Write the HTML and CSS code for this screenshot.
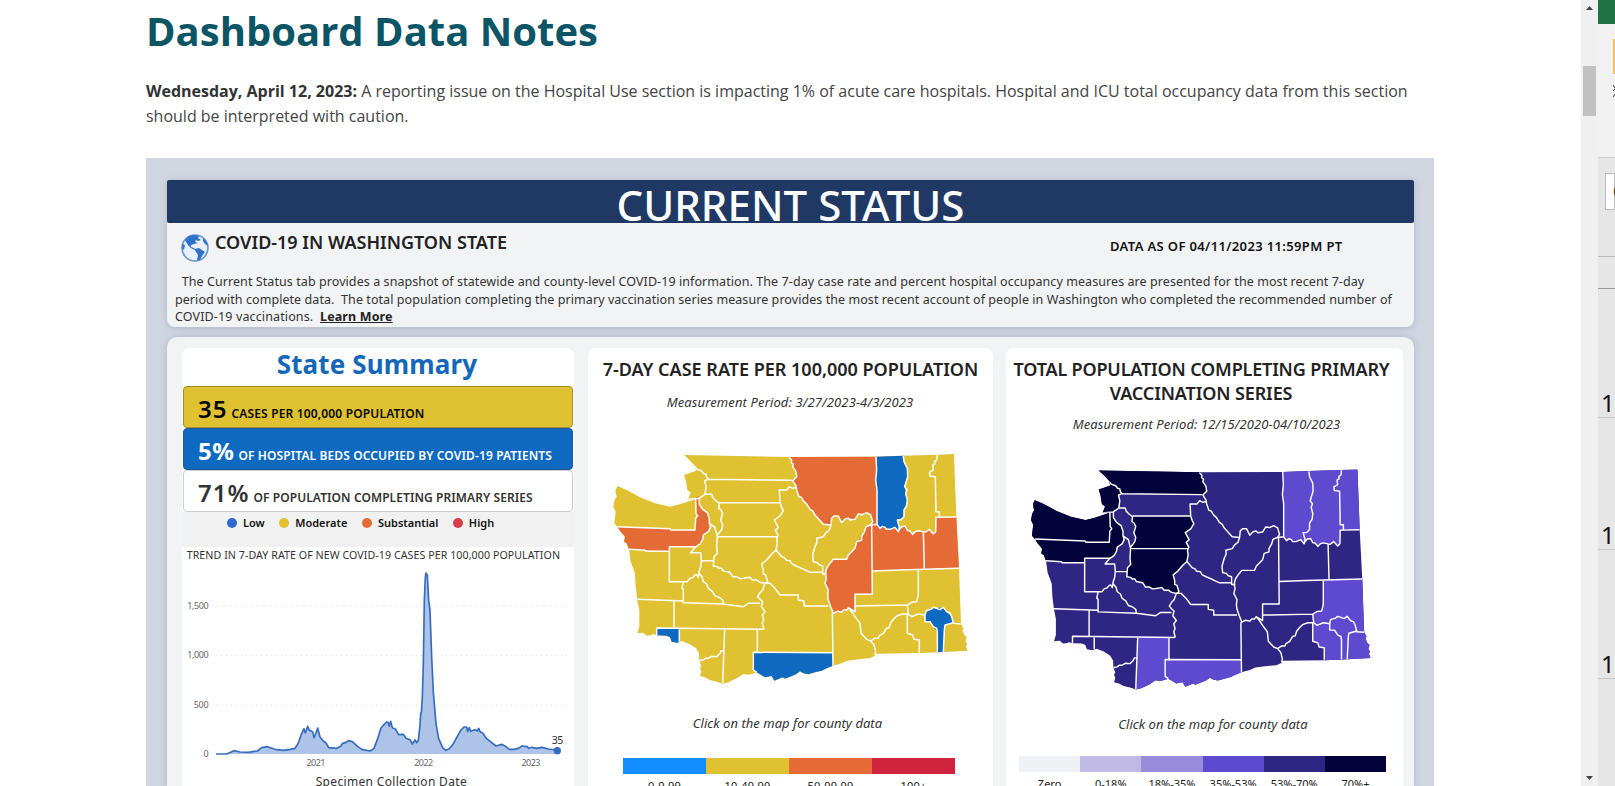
FILE: index.html
```html
<!DOCTYPE html>
<html lang="en">
<head>
<meta charset="utf-8">
<title>Dashboard Data Notes</title>
<link rel="stylesheet" href="styles.css">
</head>
<body>
<svg class="defs" aria-hidden="true">
  <defs>
    <path id="state" d="M252 45 568 51 828 50 910 47 1012 44 1062 42 1069 232 1077 385 1083 552 1090 565 1087 572 1093 585 1100 592 1096 603 1101 612 1098 620 1103 632 1030 636 960 639 826 641 824 648 808 655 780 657 760 660 742 662 725 670 699 677 680 685 665 692 645 697 625 703 610 700 600 694 588 703 570 710 555 716 548 712 523 722 515 708 503 710 495 712 480 703 470 697 462 700 445 704 430 702 410 715 385 727 368 731 350 725 330 720 315 712 300 708 304 695 300 685 304 677 298 665 297 640 288 625 268 612 245 603 232 608 215 605 210 592 200 587 170 586 160 583 150 586 140 587 130 578 112 580 118 560 118 510 112 480 107 440 105 400 92 365 87 328 80 310 72 305 75 290 62 275 52 260 43 250 47 215 40 200 44 180 50 170 46 152 52 138 80 150 120 172 165 190 210 200 240 193 285 178 264 178 272 158 262 150 258 125 252 105 275 97 288 92 285 78 268 60Z"/>
    <clipPath id="inState"><use href="#state"/></clipPath>
    <path id="okanogan" d="M567 45 575 60 578 80 588 95 590 110 578 122 588 138 590 150 597 170 612 185 630 208 645 225 670 253 693 255 695 235 715 228 725 248 745 235 765 238 775 222 800 218 812 225 818 245 812 255 831 253 831 150 827 120 830 90 828 45Z"/>
    <path id="ferry" d="M828 45 830 90 827 120 831 150 831 253 840 265 855 262 870 268 885 262 895 275 898 262 892 240 912 230 912 210 922 180 914 140 923 110 922 85 912 65 910 40Z"/>
    <path id="northeast" d="M910 40 912 65 922 85 923 110 914 140 922 180 912 210 912 230 892 240 898 262 895 272 905 260 915 258 938 283 955 272 970 275 988 268 1000 282 1007 275 1008 232 1075 231 1075 35Z"/>
    <path id="lincolnSpokane" d="M815 255 831 253 840 265 855 262 870 268 885 262 895 275 905 260 915 258 938 283 955 272 970 275 988 268 1000 282 1007 275 1008 232 1085 231 1085 385 900 390 817 393Z"/>
    <path id="grant" d="M812 255 798 260 785 290 770 305 765 325 745 345 740 358 700 358 690 370 680 385 676 402 675 430 685 450 685 480 692 500 700 520 725 517 740 510 745 503 765 515 765 463 817 463 815 255Z"/>
    <path id="whatcom" d="M240 35 568 45 575 60 578 80 588 95 590 110 578 122 325 118 318 103 305 93 285 80Z"/>
    <path id="island" d="M245 100 285 80 305 93 318 103 325 118 314 122 318 140 315 163 297 175 255 185Z"/>
    <path id="clallam" d="M30 130 210 200 287 178 288 220 293 228 287 235 285 270 212 270 210 266 30 260Z"/>
    <path id="jefferson" d="M30 260 210 266 212 270 285 270 287 235 293 228 288 220 287 170 298 170 298 193 308 208 322 218 328 235 328 262 325 275 310 285 308 298 300 312 288 320 208 320 208 334 135 331 60 328Z"/>
    <path id="snohomish" d="M358 188 540 188 550 212 540 228 523 240 535 262 526 270 534 290 352 290 360 275 368 255 362 240 368 220 356 205Z"/>
    <path id="king" d="M352 290 532 290 532 310 528 330 515 342 500 360 485 372 490 390 497 405 503 425 495 430 470 420 450 412 430 415 398 410 390 397 370 393 365 385 340 378 342 350 352 340 350 320Z"/>
    <path id="wahkiakum" d="M170 564 238 565 238 612 170 612Z"/>
    <path id="klickitat" d="M460 637 699 638 699 730 465 730 470 695 460 690Z"/>
    <path id="skamania" d="M374 568 472 568 472 637 460 637 460 690 470 695 470 735 368 735Z"/>
    <path id="garfield" d="M975 525 985 510 1000 502 1010 505 1030 502 1040 515 1055 530 1060 548 1035 555 1033 570 1030 640 1012 640 1012 575 1000 560 990 545 975 545Z"/>
    <path id="southeast" d="M955 389 1090 385 1120 645 958 645 958 600 942 598 938 585 922 580 922 495 950 485 955 465Z"/>
    <path id="borders" d="M285 80 291 88 305 93 311 101 318 103 320 112 325 118 575 121M325 118 314 122 318 140 315 163 335 163 338 172 345 180 358 190 356 205 362 209 368 220 362 240 368 255 365 268 360 275 352 285M262 178 297 175 315 163M287 178 288 220 293 228 287 235 285 270 212 270 210 266 52 260M298 175 298 193 308 208 322 218 328 235 328 250 345 262 348 275 352 290M87 328 135 331 138 334 208 334V320H288L300 312 308 298 310 285 325 275 332 262 328 250M300 312 285 322 272 338H302L304 362 302 380 297 395 295 412 290 404 285 405 278 413 270 415 262 425H208V320M304 362H340M358 188H540M352 290H532M352 285 350 320 352 340 342 350 340 378 352 380 357 385 365 385 370 393 390 397 398 410 410 410 420 416 430 415 450 412 457 420 470 420 480 427 495 430 503 425 497 405 490 402 490 390 485 372 500 360 515 342 528 330 532 310 530 295 534 285 526 270 535 262 523 240 540 228 550 212 545 203 540 188 538 150 560 150 568 140 578 145 590 142M567 52 575 60 574 68 580 72 578 80 588 95 590 110 578 122 588 138 590 150 597 170 604 172 612 185 620 192 630 208 638 213 645 225 670 253 693 255 695 235 702 228 715 228 725 248 735 237 745 235 750 240 765 238 775 222 787 224 800 218 812 225 818 245 812 255 831 253M693 255 688 270 677 279 670 290 650 295 651 307 645 320 638 345 640 365 652 368 658 375 668 378V402H680M528 330 545 350 553 353 559 361 570 362 575 371 588 378 605 385 615 390 630 397 668 397M812 255 798 260 793 276 785 290 785 300 770 305 765 325 745 345 740 358H700L690 370 680 385 676 402 679 415 675 430 685 450 683 465 685 480 692 500 700 520 712 514 725 517 731 510 740 510 745 503 755 515 765 530 780 550 783 580 800 598 812 603 822 615 827 635 825 645M828 50 830 90 827 120 831 150V253L840 265 847 259 855 262 859 268 870 268 885 262 895 275 898 262 892 240 904 239 912 230 912 210 920 198 922 180 917 160 921 150 914 140 923 110 922 85 912 65 910 48M895 272 905 260 915 258 922 271 930 273 938 283 945 275 955 272 970 275 977 276 988 268 1000 282 1007 275 1008 232 1069 231M1012 44 1010 60 1004 64 1004 72 998 75 1000 90 988 97 990 108 1006 110 1008 215 1018 215 1018 230M815 255 817 463H765V515L745 503M970 275 973 388M817 393 900 390 1077 385M955 390V465L950 485 935 487 922 495 765 498M495 430H510L525 445 540 465H595V480L612 483V498H685M495 430 488 450 480 458 473 470 480 478 488 485 484 500 495 515 487 525 491 540 487 550 492 568M297 400 306 410 310 425 320 432 325 445 337 454 345 468 357 472 368 480 370 492 430 500 445 490 480 490M250 425 246 445 250 448V488L370 492M112 478 250 483M222 483V563M170 588V564L490 568M238 565V605M374 568 368 730M298 668 300 661 310 660 316 655 325 655 335 649 350 650 360 640 364 632 370 632M472 568V637M470 697 460 690V637L699 638M697 520 699 679M812 603 824 595 835 595 838 587 850 580 859 565 867 563 872 548 881 537 890 528 907 522 922 522 922 580 938 585 942 598 958 600V638M922 495 925 522 935 530 955 522 975 525M975 525 978 512 985 510 993 508 1000 502 1010 505 1020 509 1030 502 1040 515 1050 519 1055 530 1060 550 1083 552M975 525V545H990L1000 560 1010 565 1012 575V636M1060 548 1035 555 1033 570 1030 636"/>
  </defs>
</svg>

<div class="screen">
  <main class="page">
    <h1 class="page-title">Dashboard Data Notes</h1>
    <p class="notice"><b>Wednesday, April 12, 2023:</b> A reporting issue on the Hospital Use section is impacting 1% of acute care hospitals. Hospital and ICU total occupancy data from this section<br>should be interpreted with caution.</p>

    <section class="report">
      <header class="intro">
        <div class="banner">CURRENT STATUS</div>
        <div class="intro-head">
          <svg class="globe" viewBox="0 0 28 28">
            <circle cx="14" cy="14" r="13" fill="#eaf0f8" stroke="#6494d2" stroke-width="1.6"/>
            <path fill="#2f72ca" d="M4 6 8 2 14 1 18 2 17 4 20 6 17 7 15 6 14 8 17 9 13 10 10 11 10 13 13 14 14 15 18 14 24 18 21 22 19 26 16 26 17 21 15 18 14 16 10 14 7 11 5 8ZM22 4 25 7 27 12 24 10 22 7ZM2 10 4 11 3 16 1 14Z"/>
          </svg>
          <h2 class="intro-title">COVID-19 IN WASHINGTON STATE</h2>
          <div class="as-of">DATA AS OF 04/11/2023 11:59PM PT</div>
        </div>
        <p class="intro-text"><span class="line l1">&nbsp; The Current Status tab provides a snapshot of statewide and county-level COVID-19 information. The 7-day case rate and percent hospital occupancy measures are presented for the most recent 7-day</span><span class="line l2">period with complete data.&nbsp; The total population completing the primary vaccination series measure provides the most recent account of people in Washington who completed the recommended number of</span><span class="line l3">COVID-19 vaccinations.&nbsp; <a class="more">Learn More</a></span></p>
      </header>

      <div class="board">
        <section class="card summary">
          <h2 class="summary-title">State Summary</h2>
          <div class="stat moderate"><b>35</b><span class="s1">CASES PER 100,000 POPULATION</span></div>
          <div class="stat low"><b>5%</b><span class="s2">OF HOSPITAL BEDS OCCUPIED BY COVID-19 PATIENTS</span></div>
          <div class="stat plain"><b>71%</b><span class="s3">OF POPULATION COMPLETING PRIMARY SERIES</span></div>
          <div class="levels">
            <span class="level k-low">Low</span><span class="level k-mod">Moderate</span><span class="level k-sub">Substantial</span><span class="level k-high">High</span>
          </div>
          <div class="trend">
            <svg class="chart" viewBox="66 20 1176 720">
              <text class="chart-title" x="80" y="57" textLength="1120">TREND IN 7-DAY RATE OF NEW COVID-19 CASES PER 100,000 POPULATION</text>
              <path class="grid" d="M168 198H1222M168 346H1222M168 495H1222"/>
              <g class="ticks" text-anchor="end"><text x="146" y="206" textLength="64">1,500</text><text x="146" y="353" textLength="64">1,000</text><text x="146" y="502" textLength="45">500</text><text x="146" y="650">0</text></g>
              <path class="area" d="M168 641 200 641 222 631 240 635 265 636 292 632 305 622 322 619 345 627 370 630 390 627 405 624 414 610 424 582 432 565 436 578 443 558 448 570 458 574 462 592 468 578 473 563 480 590 488 600 498 608 506 622 530 624 542 618 548 609 558 606 565 601 577 604 590 616 605 627 630 632 642 624 653 595 663 563 672 553 680 545 684 546 688 558 692 543 697 562 706 566 716 583 730 582 738 594 750 598 757 611 765 599 770 607 775 600 780 555 786 480 790 370 793 180 796 110 798 98 802 104 806 180 810 210 815 350 820 455 828 550 836 595 848 622 857 630 868 625 880 610 892 588 902 570 912 560 920 560 923 573 928 562 932 573 945 568 952 572 956 564 960 574 968 578 980 595 1008 617 1025 612 1038 619 1048 627 1062 627 1075 624 1086 617 1102 619 1106 624 1115 621 1130 624 1146 621 1165 626 1192 629 1192 641Z"/>
              <path class="curve" d="M168 641 200 641 222 631 240 635 265 636 292 632 305 622 322 619 345 627 370 630 390 627 405 624 414 610 424 582 432 565 436 578 443 558 448 570 458 574 462 592 468 578 473 563 480 590 488 600 498 608 506 622 530 624 542 618 548 609 558 606 565 601 577 604 590 616 605 627 630 632 642 624 653 595 663 563 672 553 680 545 684 546 688 558 692 543 697 562 706 566 716 583 730 582 738 594 750 598 757 611 765 599 770 607 775 600 780 555 782 520 784 518 787 470 790 370 793 180 796 110 798 98 802 104 806 180 810 210 815 350 820 455 828 550 836 595 848 622 857 630 868 625 880 610 892 588 902 570 912 560 920 560 923 573 928 562 932 573 945 568 952 572 956 564 960 574 968 578 980 595 1008 617 1025 612 1038 619 1048 627 1062 627 1075 624 1086 617 1102 619 1106 624 1115 621 1130 624 1146 621 1165 626 1192 629"/>
              <circle class="end-dot" cx="1192" cy="631" r="11"/>
              <text class="end-label" x="1175" y="611" textLength="35">35</text>
              <g class="ticks" text-anchor="middle"><text x="468" y="677" textLength="57">2021</text><text x="791" y="677" textLength="57">2022</text><text x="1113" y="677" textLength="57">2023</text></g>
              <text class="axis-title" x="467" y="737" textLength="453">Specimen Collection Date</text>
            </svg>
          </div>
        </section>

        <section class="card rate">
          <h2 class="card-title"><span class="t1">7-DAY CASE RATE PER 100,000 POPULATION</span></h2>
          <p class="period p1">Measurement Period: 3/27/2023-4/3/2023</p>
          <svg class="map map-rate" viewBox="0 0 1110 750">
            <use href="#state" fill="#dfc131"/>
            <g clip-path="url(#inState)">
              <g fill="#e56b36"><use href="#okanogan"/><use href="#lincolnSpokane"/><use href="#grant"/><use href="#jefferson"/></g>
              <g fill="#0e69c0"><use href="#ferry"/><use href="#wahkiakum"/><use href="#klickitat"/><use href="#garfield"/></g>
              <use class="lines" href="#borders"/>
            </g>
          </svg>
          <p class="hint">Click on the map for county data</p>
          <div class="scale scale-rate">
            <span class="step r1">0-9.99</span><span class="step r2">10-49.99</span><span class="step r3">50-99.99</span><span class="step r4">100+</span>
          </div>
        </section>

        <section class="card vaccine">
          <h2 class="card-title"><span class="t2">TOTAL POPULATION COMPLETING PRIMARY</span><br><span class="t3">VACCINATION SERIES</span></h2>
          <p class="period p2">Measurement Period: 12/15/2020-04/10/2023</p>
          <svg class="map map-vaccine" viewBox="0 0 1110 750">
            <use href="#state" fill="#2f2583"/>
            <g clip-path="url(#inState)">
              <g fill="#03023b"><use href="#whatcom"/><use href="#island"/><use href="#clallam"/><use href="#jefferson"/><use href="#snohomish"/><use href="#king"/></g>
              <g fill="#5d4acf"><use href="#ferry"/><use href="#northeast"/><use href="#southeast"/><use href="#skamania"/><use href="#klickitat"/></g>
              <use class="lines" href="#borders"/>
            </g>
          </svg>
          <p class="hint">Click on the map for county data</p>
          <div class="scale scale-vaccine">
            <span class="step v0">Zero</span><span class="step v1">0-18%</span><span class="step v2">18%-35%</span><span class="step v3">35%-53%</span><span class="step v4">53%-70%</span><span class="step v5">70%+</span>
          </div>
        </section>
      </div>
    </section>
  </main>

  <div class="scrollbar">
    <svg class="arrow" viewBox="0 0 17 17"><path d="M5 10 8.500 6 12 10Z"/></svg>
    <div class="thumb"></div>
    <svg class="arrow" viewBox="0 0 17 17"><path d="M5 7 8.500 11 12 7Z"/></svg>
  </div>

  <aside class="sheet">
    <div class="sheet-title"></div>
    <div class="ribbon">
      <div class="swatch"></div>
      <svg class="ribbon-icon" viewBox="0 0 2 14"><path d="M0 1 2 4M0 7 2 5M0 13 2 10" stroke="#333" fill="none"/></svg>
    </div>
    <div class="formula"><div class="name-box"><span>C</span></div></div>
    <div class="column-head"></div>
    <div class="row row-a">1</div>
    <div class="row row-b">1</div>
    <div class="row row-c">1</div>
  </aside>
</div>
</body>
</html>
```
FILE: styles.css
```css
* { box-sizing: border-box; }
body { margin: 0; background: #fff; overflow: hidden; font-family: "Noto Sans", "Open Sans", sans-serif; color: #222; }
h1, h2, p { margin: 0; }
.defs { position: absolute; width: 0; height: 0; }
.screen { display: flex; width: 1615px; height: 786px; overflow: hidden; }

.page { width: 1581px; flex: none; padding: 3px 147px 0 146px; overflow: hidden; }
.page-title { font: bold 40px/56px "Open Sans", sans-serif; color: #0b5566; white-space: nowrap; }
.notice { margin-top: 20px; height: 79px; font: 16px/25px "Open Sans", sans-serif; letter-spacing: -0.004px; color: #444; white-space: nowrap; }
.notice b { color: #333; }

.report { width: 1288px; height: 628px; padding: 22px 20px 0 21px; background: #d0d5e0; overflow: hidden; }
.intro { height: 147px; border-radius: 3px 3px 8px 8px; background: #f2f3f5; box-shadow: 0 1px 6px #aeb6c5; }
.banner { height: 43px; border-radius: 2px; background: #203864; color: #fff; text-align: center; font-size: 42px; line-height: 49px; font-weight: 500; letter-spacing: .05px; white-space: nowrap; }
.intro-head { display: flex; height: 50px; padding-left: 14px; white-space: nowrap; }
.globe { width: 28px; height: 28px; margin-top: 11px; flex: none; }
.intro-title { width: 840px; margin-left: 6px; font-size: 18px; line-height: 38px; font-weight: 600; }
.as-of { margin-left: 55px; font-size: 13px; line-height: 47px; font-weight: 600; letter-spacing: .36px; color: #111; }
.intro-text { padding-left: 8px; font-size: 12.500px; line-height: 17.500px; color: #333; white-space: nowrap; }
.line { display: block; }
.l1 { letter-spacing: .078px; }
.l2 { letter-spacing: .065px; }
.l3 { letter-spacing: .13px; }
.more { font-weight: bold; text-decoration: underline; color: #222; }

.board { display: flex; height: 460px; margin-top: 10px; padding: 11px 11px 0 15px; border-radius: 10px; background: #f2f3f5; box-shadow: 0 0 6px #aeb6c5; }
.card { height: 449px; flex: none; border-radius: 8px 8px 0 0; background: #fff; overflow: hidden; text-align: center; white-space: nowrap; }
.summary { width: 392px; }
.rate { width: 405px; margin-left: 14px; }
.vaccine { width: 397px; margin-left: 13px; }

.summary-title { height: 38px; padding-right: 2px; font-size: 26px; line-height: 33px; letter-spacing: .15px; color: #1467b9; }
.stat { display: flex; align-items: baseline; height: 42px; margin: 0 1px; padding-left: 14px; border: 1px solid #a48e2b; border-radius: 4px; line-height: 44px; font-size: 12px; font-weight: 600; text-align: left; }
.stat b { margin-right: 4px; font-size: 24px; font-weight: 600; letter-spacing: 1px; }
.s1 { letter-spacing: .16px; }
.s3 { letter-spacing: .08px; }
.moderate { background: #dfc131; color: #080808; }
.low { background: #0e69c0; border-color: #1f5894; color: #fff; }
.low b { font-weight: 700; letter-spacing: .5px; margin-right: 4px; }
.low span { font-weight: 600; letter-spacing: .12px; }
.plain { background: #fff; border-color: #ccc; color: #333; }
.levels { display: flex; height: 35px; padding: 0 0 0 45px; background: #f1f1f1; font-size: 11px; line-height: 21px; font-weight: 600; color: #111; }
.level { display: flex; align-items: center; height: 21px; margin-right: 14.500px; }
.level::before { content: ""; width: 10px; height: 10px; margin-right: 6px; border-radius: 50%; background: #2f68cf; }
.k-mod::before { background: #dfc131; }
.k-sub::before { background: #e56b36; }
.k-high::before { background: #da3c4d; }
.chart { display: block; width: 392px; height: 240px; }
.chart text { font-family: "Noto Sans", sans-serif; fill: #333; }
.chart .chart-title { font-size: 32px; }
.chart .ticks text { font-size: 27px; fill: #666; }
.chart .end-label { font-size: 32px; }
.chart .axis-title { font-size: 36px; }
.grid { stroke: #ddd; stroke-width: 3; stroke-dasharray: 3 12; }
.area { fill: #adc4e8; }
.curve { fill: none; stroke: #356dbc; stroke-width: 5; stroke-linejoin: round; }
.end-dot { fill: #356dbc; }

.card-title { padding-top: 9px; font-size: 18px; line-height: 24px; font-weight: 600; }
.t2 { letter-spacing: -.17px; margin-right: 6px; }
.t3 { letter-spacing: -.12px; margin-right: 7px; }
.period, .hint { font-size: 13px; line-height: 20px; font-style: italic; color: #333; }
.period { margin-top: 11px; }
.p1 { letter-spacing: .12px; padding-right: 1px; }
.p2 { margin-top: 9px; letter-spacing: .1px; padding-left: 4px; }
.map { display: block; }
.map-rate { width: 370px; height: 250px; margin: 28px 0 0 12px; }
.map-vaccine { width: 355px; height: 239.600px; margin: 22px 0 0 12px; }
.lines { fill: none; stroke: #fff; stroke-width: 4.500; stroke-linejoin: round; }
.rate .hint { margin: 23px 6px 0 0; letter-spacing: .03px; }
.vaccine .hint { margin: 18px 0 0 17px; letter-spacing: .03px; }
.scale { display: flex; text-align: center; font-size: 11px; line-height: 15px; }
.scale-rate { width: 332px; margin: 25px 0 0 35px; letter-spacing: .25px; }
.scale-vaccine { width: 367px; margin: 22px 0 0 13px; }
.step { flex: 1; padding-top: 5px; }
.step::before { content: ""; display: block; height: 16px; margin: -5px 0 4px; background: #118dff; }
.r2::before { background: #dfc131; }
.r3::before { background: #e56b36; }
.r4::before { background: #d0243e; }
.v0::before { background: #eff0f3; }
.v1::before { background: #c0b9e3; }
.v2::before { background: #998ddb; }
.v3::before { background: #5d4acf; }
.v4::before { background: #2f2583; }
.v5::before { background: #03023b; }

.scrollbar { display: flex; flex-direction: column; width: 17px; height: 786px; flex: none; background: #f0f0f0; }
.arrow { width: 17px; height: 17px; fill: #444; }
.thumb { width: 13px; height: 50px; margin: 49px 2px 653px; flex: none; background: #c1c1c1; }

.sheet { width: 17px; height: 786px; flex: none; background: #e6e6e6; overflow: hidden; }
.sheet-title { height: 24px; background: #217346; }
.ribbon { height: 134px; padding: 15px 0 0 15px; background: #f1f1f1; border-bottom: 1px solid #ccc; }
.swatch { width: 2px; height: 35px; background: #f2c35c; }
.ribbon-icon { display: block; width: 2px; height: 14px; margin-top: 10px; }
.formula { height: 99px; padding: 15px 0 0 7px; border-bottom: 1px solid #bbb; }
.name-box { height: 37px; padding-left: 7px; border: 1px solid #bbb; background: #fff; font: bold 18px/36px "Liberation Sans", sans-serif; color: #604545; }
.column-head { height: 32px; border-bottom: 1px solid #999; }
.row { display: flex; align-items: flex-end; height: 129px; padding-left: 3px; border-bottom: 1px solid #c6c6c6; font-size: 24px; line-height: 28px; color: #111; }
.row-b { height: 132px; }
```
